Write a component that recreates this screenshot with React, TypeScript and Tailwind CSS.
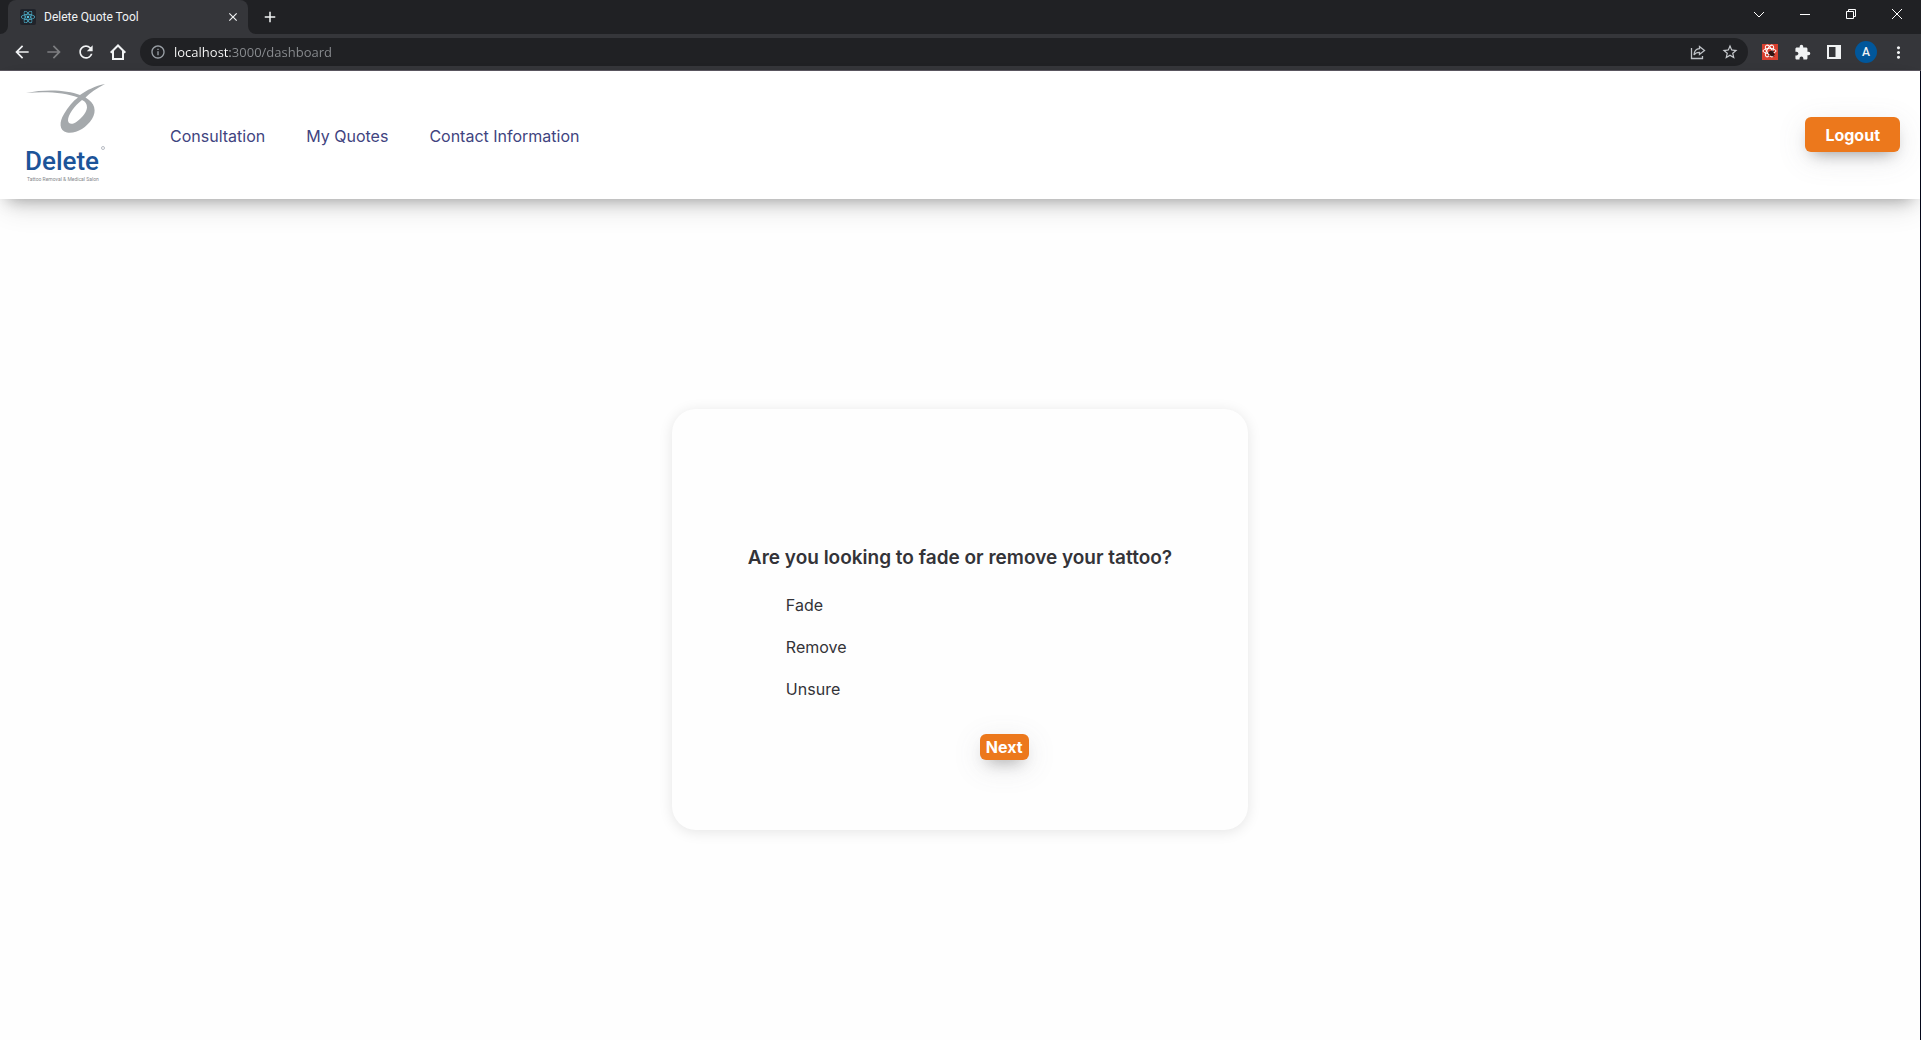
import React from "react";
import { MdArrowBack, MdArrowForward, MdRefresh, MdInfoOutline, MdStarOutline, MdExtension, MdMoreVert, MdClose, MdAdd } from "react-icons/md";
import { FaReact } from "react-icons/fa";

function ToolButton({ label, children }: { label: string; children: React.ReactNode }) {
  return (
    <button type="button" aria-label={label} className="flex h-7 w-8 shrink-0 items-center justify-center text-[#f1f3f4]">
      {children}
    </button>
  );
}

function WindowButton({ label, children }: { label: string; children: React.ReactNode }) {
  return (
    <button type="button" aria-label={label} className="flex h-7 w-[46px] items-center justify-center text-white">
      <svg width="12" height="12" viewBox="0 0 12 12" fill="none" stroke="currentColor" strokeWidth="1">
        {children}
      </svg>
    </button>
  );
}

function TabStrip() {
  return (
    <div className="flex h-[34px] items-start justify-between bg-[#202124] pr-px">
      <div className="flex h-full items-end">
        <svg width="8" height="8" viewBox="0 0 8 8" fill="#35363a"><path d="M8 0v8H0a8 8 0 0 0 8-8z" /></svg>
        <div className="flex h-full w-60 items-center rounded-t-lg bg-[#35363a] pl-3 pr-2 pb-px">
          <span className="flex size-4 items-center justify-center rounded-xs bg-[#20232a]">
            <FaReact size={14} className="text-[#53c1de]" />
          </span>
          <span className="ml-2 flex-1 font-[Roboto,sans-serif] text-xs text-[#f1f3f4]">Delete Quote Tool</span>
          <button type="button" aria-label="Close tab" className="text-[#f1f3f4]"><MdClose size={14} /></button>
        </div>
        <svg width="8" height="8" viewBox="0 0 8 8" fill="#35363a"><path d="M0 0v8h8a8 8 0 0 1-8-8z" /></svg>
        <button type="button" aria-label="New tab" className="flex h-full w-7 items-center justify-center text-[#f1f3f4]">
          <MdAdd size={18} />
        </button>
      </div>
      <div className="flex">
        <WindowButton label="Search tabs"><path d="M1 4l5 5 5-5" /></WindowButton>
        <WindowButton label="Minimize"><path d="M1 6.5h10" /></WindowButton>
        <WindowButton label="Restore"><path d="M1.500 3.500h7v7h-7zM3.500 3.500v-2h7v7h-2" /></WindowButton>
        <WindowButton label="Close"><path d="M1 1l10 10M11 1L1 11" /></WindowButton>
      </div>
    </div>
  );
}

function Toolbar() {
  return (
    <div className="flex h-[37px] items-center border-b border-[#5b5760] bg-[#35363a] pl-1.5 pr-[7px]">
      <ToolButton label="Back"><MdArrowBack size={20} /></ToolButton>
      <ToolButton label="Forward"><MdArrowForward size={20} className="text-[#7d7e81]" /></ToolButton>
      <ToolButton label="Reload"><MdRefresh size={20} /></ToolButton>
      <ToolButton label="Home">
        <svg width="16" height="16" viewBox="0 0 16 16" fill="none" stroke="currentColor" strokeWidth="2">
          <path d="M.7 8.700L8 1.500l7.300 7.200M3 7v8h10V7" />
        </svg>
      </ToolButton>
      <div className="ml-1.5 mr-1.5 flex h-7 flex-1 items-center rounded-full bg-[#202124] pl-2.5 pr-0.5">
        <MdInfoOutline size={16} className="text-[#9aa0a6]" />
        <input
          type="text"
          aria-label="Address"
          defaultValue="localhost:3000/dashboard"
          className="ml-2 flex-1 bg-[linear-gradient(to_right,#fff_56px,#8a8d91_56px)] bg-clip-text font-['Open_Sans',sans-serif] text-[13px] leading-5 text-transparent caret-white outline-none"
        />
        <ToolButton label="Share">
          <svg width="16" height="16" viewBox="0 0 16 16" fill="none" stroke="#bdc1c6" strokeWidth="1.300">
            <path d="M1.500 4v10.500h11V12M9.500 2.500L14.500 6.500l-5 4V8.300C6.500 8.300 5 9.300 4 11c.2-3.500 2-6 5.500-6.300z" />
          </svg>
        </ToolButton>
        <ToolButton label="Bookmark this tab"><MdStarOutline size={18} className="text-[#c8cbcf]" /></ToolButton>
      </div>
      <ToolButton label="React developer tools">
        <span className="flex size-4 items-center justify-center bg-[#d9402f]">
          <svg width="16" height="16" viewBox="0 0 16 16" fill="none" stroke="#fff" strokeWidth="1">
            <ellipse cx="7.500" cy="7" rx="6.500" ry="2.600" />
            <ellipse cx="7.500" cy="7" rx="6.500" ry="2.600" transform="rotate(60 7.500 7)" />
            <ellipse cx="7.500" cy="7" rx="6.500" ry="2.600" transform="rotate(120 7.500 7)" />
            <ellipse cx="9.500" cy="9.500" rx="2.200" ry="3" fill="#301312" stroke="none" transform="rotate(-40 9.500 9.500)" />
            <path d="M6 9l7 1.500M7 12l5-5M10 6l2 7" stroke="#301312" strokeWidth=".8" />
          </svg>
        </span>
      </ToolButton>
      <ToolButton label="Extensions"><MdExtension size={17} /></ToolButton>
      <ToolButton label="Side panel">
        <svg width="14" height="14" viewBox="0 0 14 14" fill="currentColor"><path fillRule="evenodd" d="M0 0h14v14H0zM2 2v10h6.500V2z" /></svg>
      </ToolButton>
      <ToolButton label="Profile">
        <span className="flex size-[22px] items-center justify-center rounded-full bg-[#01579b] font-[Roboto,sans-serif] text-xs font-medium">A</span>
      </ToolButton>
      <ToolButton label="Menu"><MdMoreVert size={19} /></ToolButton>
    </div>
  );
}

function Logo() {
  return (
    <a href="#home" aria-label="Delete Tattoo Removal & Medical Salon">
      <svg width="80" height="102" viewBox="0 -1 80 102" className="block">
        <path
          fill="#a5a9ac"
          fillRule="evenodd"
          d="M0 9C20 5 41 6 54 11C61 6 69 2 79 0C71 4 64 9 59.500 13.500C69 19 71 27 66 35C60 44 50 50 41 48.500C33 46.500 33 38 38 30C42 23 47 17 52 13.500C39 8.500 20 7 0 9ZM56 16C48 22 42 31 42 36.500C42.500 41 47 40.500 51 37.500C57 33 60.500 28 61 23.500C61 20 59.500 17.500 56 16Z"
        />
        <text x="-1" y="86" fontFamily="Roboto, sans-serif" fontSize="26" fontWeight="500" fill="#1c5499">Delete</text>
        <circle cx="77" cy="64" r="1.500" fill="none" stroke="#b8bcc4" strokeWidth="1" />
        <text x="1" y="97" fontFamily="Roboto, sans-serif" fontSize="5" fill="#85888c">Tattoo Removal &amp; Medical Salon</text>
      </svg>
    </a>
  );
}

function Header() {
  return (
    <header className="flex h-32 items-center justify-between bg-white pb-0.5 pl-[26px] pr-5 shadow-[0_13px_27px_-5px_rgba(0,0,0,0.12),0_8px_16px_-8px_rgba(0,0,0,0.35)]">
      <div className="flex items-center gap-16">
        <Logo />
        <nav className="flex gap-[41px] pt-1 text-[#3f4480]">
          <a href="#consultation">Consultation</a>
          <a href="#quotes">My Quotes</a>
          <a href="#contact">Contact Information</a>
        </nav>
      </div>
      <button type="button" className="h-[35px] rounded-md bg-[#ec781c] px-5 pt-px font-bold text-white shadow-[0_7px_29px_rgba(100,100,111,0.15),0_8px_16px_-8px_rgba(0,0,0,0.4)]">
        Logout
      </button>
    </header>
  );
}

const options = ["Fade", "Remove", "Unsure"];

export default function App() {
  return (
    <div className="flex min-h-screen flex-col bg-[#fefefe] font-[Inter,sans-serif]">
      <div>
        <TabStrip />
        <Toolbar />
      </div>
      <div className="flex flex-1 flex-col border-r border-[#05081a]">
        <Header />
        <main className="flex flex-1 items-center justify-center">
          <form className="flex w-[30%] min-w-fit flex-col items-center rounded-3xl bg-[#fefefe] px-8 pb-[70px] pt-[135px] text-[#333338] shadow-[0_2px_14px_rgba(0,0,0,0.1)]">
            <fieldset>
              <legend className="text-[19px] font-semibold leading-7">Are you looking to fade or remove your tattoo?</legend>
              <div className="mt-3 flex flex-col items-start pl-[38px]">
                {options.map((o) => (
                  <label key={o} className="relative flex h-[42px] cursor-pointer items-center">
                    <input type="radio" name="goal" value={o} className="sr-only" />
                    {o}
                  </label>
                ))}
              </div>
              <div className="mt-6 flex pl-[232px]">
                <button type="button" className="h-[26px] rounded-md bg-[#ec781c] px-1.5 font-bold text-white shadow-[0_7px_29px_rgba(100,100,111,0.15),0_8px_16px_-8px_rgba(0,0,0,0.4)]">
                  Next
                </button>
              </div>
            </fieldset>
          </form>
        </main>
      </div>
    </div>
  );
}
